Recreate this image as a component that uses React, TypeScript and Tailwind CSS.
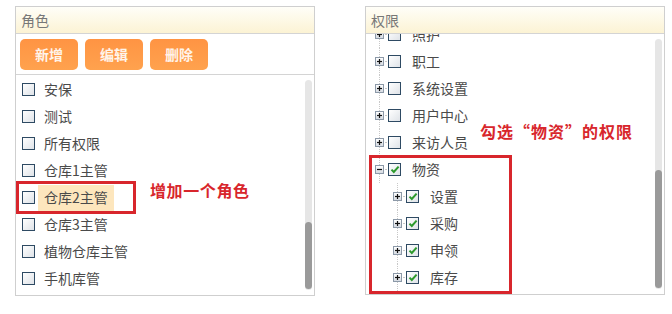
import React from 'react';

const FONT = { fontFamily: '"Noto Sans CJK SC", "Liberation Sans", sans-serif' };

function CheckBox({ checked = false }: { checked?: boolean }) {
  return (
    <span className="flex h-[13px] w-[13px] shrink-0 items-center justify-center border border-[#2e4a63] bg-gradient-to-br from-[#ffffff] to-[#dfe3e8]">
      {checked && (
        <svg width="10" height="9" viewBox="0 0 10 9">
          <path d="M1.5 4.6 L3.8 7 L8.6 1.6" fill="none" stroke="#2d9a2d" strokeWidth="2" />
        </svg>
      )}
    </span>
  );
}

function Expander({ open = false }: { open?: boolean }) {
  return (
    <span className="flex h-[9px] w-[9px] shrink-0 items-center justify-center border border-[#8c99a8] bg-gradient-to-b from-[#ffffff] to-[#d6dbe2]">
      <svg width="7" height="7" viewBox="0 0 7 7">
        <path d="M1 3.5 H6" stroke="#111" strokeWidth="1.2" />
        {!open && <path d="M3.5 1 V6" stroke="#111" strokeWidth="1.2" />}
      </svg>
    </span>
  );
}

function Scrollbar({ top, height }: { top: number; height: number }) {
  return (
    <div className="absolute right-[2px] top-[5px] bottom-[5px] w-[7px] rounded-full bg-[#e6e6e6]">
      <div
        className="absolute left-0 w-[7px] rounded-full bg-[#9a9a9a]"
        style={{ top, height }}
      />
    </div>
  );
}

const roles = ['安保', '测试', '所有权限', '仓库1主管', '仓库2主管', '仓库3主管', '植物仓库主管', '手机库管'];

const perms: { label: string; level: number; checked?: boolean; open?: boolean }[] = [
  { label: '照护', level: 0 },
  { label: '职工', level: 0 },
  { label: '系统设置', level: 0 },
  { label: '用户中心', level: 0 },
  { label: '来访人员', level: 0 },
  { label: '物资', level: 0, checked: true, open: true },
  { label: '设置', level: 1, checked: true },
  { label: '采购', level: 1, checked: true },
  { label: '申领', level: 1, checked: true },
  { label: '库存', level: 1, checked: true },
];

export default function App() {
  return (
    <div className="relative h-[314px] w-[672px] bg-white text-[14px] text-[#4a4a4a]" style={FONT}>
      <div className="flex gap-[50px] pl-[15px] pt-[6px]">
        {/* roles panel */}
        <div className="flex h-[290px] w-[300px] flex-col border border-[#cfcfcf]">
          <div className="flex h-[27px] items-center border-b border-[#d4d4d4] bg-gradient-to-b from-[#fffef8] to-[#fcf3d4] pl-[5px] text-[#777]">
            角色
          </div>
          <div className="flex h-[41px] items-center gap-[7px] border-b border-[#d4d4d4] pl-[4px]">
            {['新增', '编辑', '删除'].map((b) => (
              <button
                key={b}
                className="h-[31px] w-[58px] rounded-[5px] bg-gradient-to-b from-[#ff9443] to-[#ffa24e] text-[14px] font-bold text-[#fff4ea]"
              >
                {b}
              </button>
            ))}
          </div>
          <div className="relative flex-1 overflow-hidden pt-[1px]">
            {roles.map((r) => (
              <div key={r} className="flex h-[27px] items-center pl-[6px]">
                <CheckBox />
                <span
                  className={`ml-[3px] flex h-[26px] items-center px-[6px] ${
                    r === '仓库2主管' ? 'bg-[#fde6bd]' : ''
                  }`}
                >
                  {r}
                </span>
              </div>
            ))}
            <Scrollbar top={142} height={67} />
          </div>
        </div>

        {/* permissions panel */}
        <div className="flex h-[289px] w-[300px] flex-col border border-[#cfcfcf]">
          <div className="flex h-[27px] shrink-0 items-center border-b border-[#d4d4d4] bg-gradient-to-b from-[#fffef8] to-[#fcf3d4] pl-[5px] text-[#777]">
            权限
          </div>
          <div className="relative flex-1 overflow-hidden">
            <div className="mt-[-13px]">
              {perms.map((p) => (
                <div
                  key={p.label}
                  className={`flex h-[27px] items-center ${p.level === 1 ? 'pl-[27px]' : 'pl-[9px]'}`}
                >
                  <span className="relative flex h-full items-center">
                    <span className="absolute left-[4px] top-0 h-full border-l border-dotted border-[#c8c8c8]" />
                    <span className="relative">
                      <Expander open={p.open} />
                    </span>
                  </span>
                  <span className="ml-[1px] mr-[-1px] w-[4px] border-t border-dotted border-[#c8c8c8]" />
                  <CheckBox checked={p.checked} />
                  <span className="ml-[11px]">{p.label}</span>
                </div>
              ))}
            </div>
            <Scrollbar top={131} height={118} />
          </div>
        </div>
      </div>

      {/* annotations */}
      <div className="absolute left-[16px] top-[181px] h-[33px] w-[120px] border-[3px] border-[#d8262c]" />
      <div className="absolute left-[150px] top-[178px] text-[16px] font-bold tracking-[0.6px] text-[#d8262c]">增加一个角色</div>
      <div className="absolute left-[369px] top-[155px] h-[139px] w-[143px] border-[3px] border-[#d8262c]" />
      <div className="absolute left-[480px] top-[119px] text-[16px] font-bold tracking-[1px] text-[#d8262c]">勾选“物资”的权限</div>
    </div>
  );
}
